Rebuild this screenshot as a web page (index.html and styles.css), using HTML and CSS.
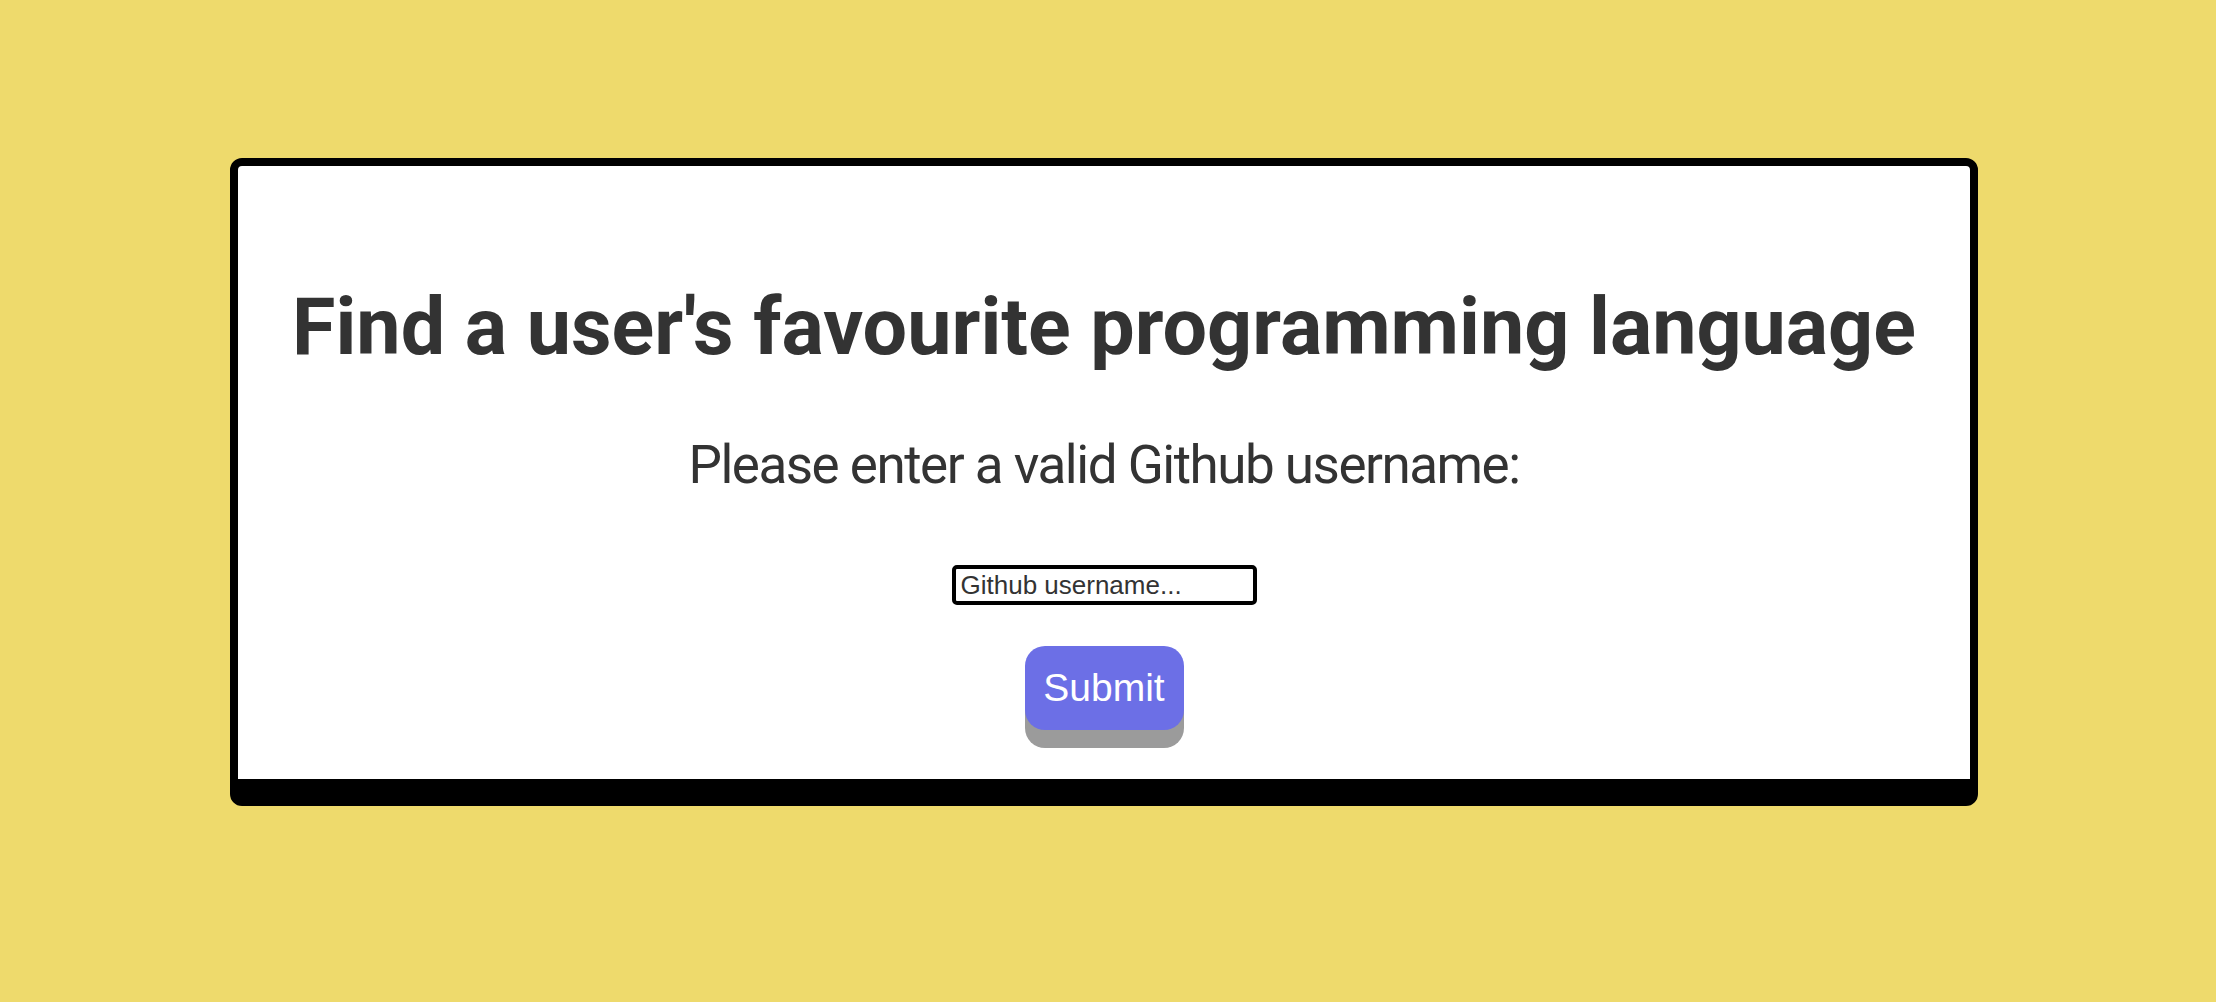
FILE: index.html
```html
<!DOCTYPE html>
<html lang="en">
<head>
<meta charset="utf-8">
<title>Favourite language</title>
<link rel="stylesheet" href="styles.css">
</head>
<body>
<main class="card">
  <h1 class="title">Find a user's favourite programming language</h1>
  <p class="prompt">Please enter a valid Github username:</p>
  <form class="form" onsubmit="return false">
    <input class="field" type="text" placeholder="Github username...">
    <button class="submit" type="submit">Submit</button>
  </form>
</main>
</body>
</html>
```
FILE: styles.css
```css
html, body {
  margin: 0;
  padding: 0;
  background: #eeda6c;
}
body {
  padding-top: 158px;
  padding-left: 230px;
  font-family: Roboto, "Noto Sans", sans-serif;
  color: #333;
}
.card {
  box-sizing: border-box;
  width: 1748px;
  height: 648px;
  background: #fff;
  border: 8px solid #000;
  border-bottom-width: 27px;
  border-radius: 12px;
  display: flex;
  flex-direction: column;
  align-items: center;
  padding-top: 115px;
}
.title {
  margin: 0;
  font-size: 79px;
  font-weight: 700;
  line-height: 93px;
  white-space: nowrap;
}
.prompt {
  margin: 58px 0 0;
  font-size: 53px;
  font-weight: 400;
  line-height: 66px;
  letter-spacing: -1.5px;
}
.form {
  margin-top: 67px;
  display: flex;
  flex-direction: column;
  align-items: center;
}
.field {
  box-sizing: border-box;
  width: 305px;
  height: 40px;
  border: 4px solid #000;
  border-radius: 5px;
  padding: 0 5px;
  font-family: "Liberation Sans", Arial, sans-serif;
  font-size: 26px;
  color: #333;
  outline: none;
}
.field::placeholder {
  color: #333;
}
.submit {
  margin-top: 41px;
  width: 159px;
  height: 84px;
  border: none;
  border-radius: 20px;
  background: #6c6fe6;
  color: #fff;
  font-family: "Liberation Sans", Arial, sans-serif;
  font-size: 39px;
  box-shadow: 0 18px 0 #9b9b9b;
  cursor: pointer;
}
```
